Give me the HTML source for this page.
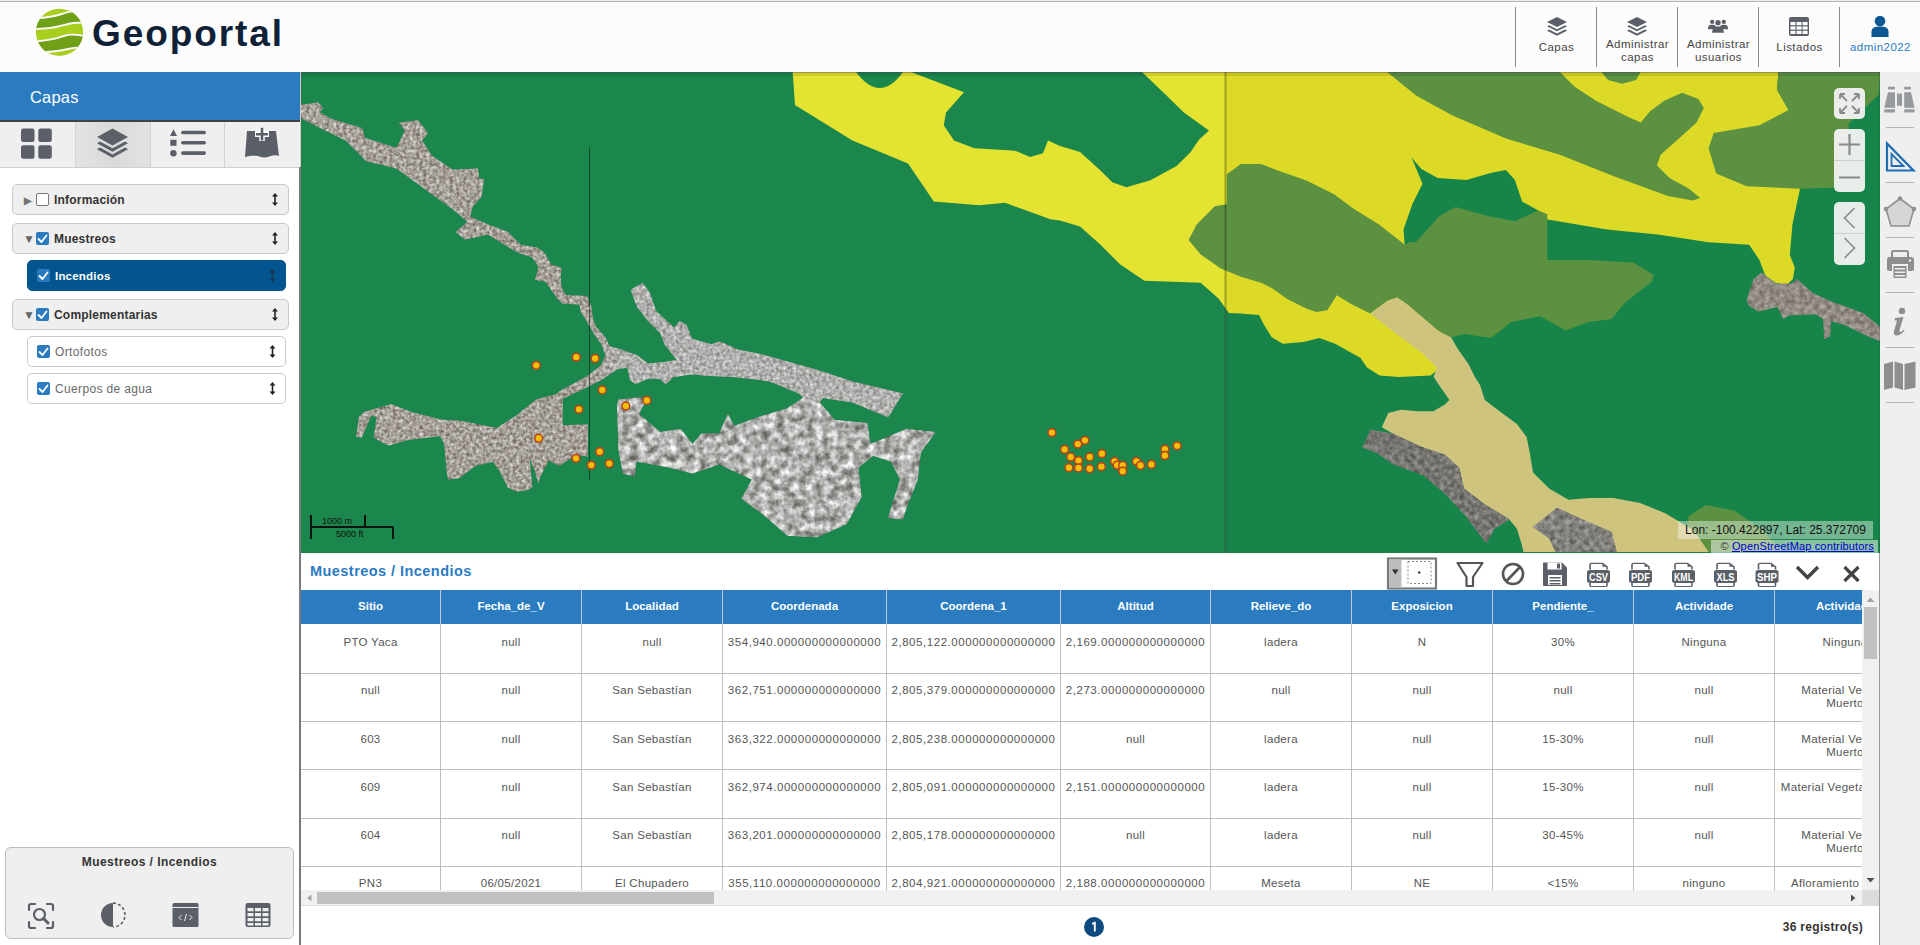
<!DOCTYPE html>
<html><head><meta charset="utf-8">
<style>
*{box-sizing:border-box;margin:0;padding:0}
html,body{width:1920px;height:945px;overflow:hidden;background:#fff;font-family:"Liberation Sans",sans-serif;position:relative}
.a{position:absolute}
#hdr{left:0;top:0;width:1920px;height:72px;background:#fcfcfc;border-top:1px solid #efefef}
#hdrl{left:0;top:1px;width:1920px;height:1px;background:#b4b4b4}
.brand{left:92px;top:12px;font-size:37px;font-weight:bold;color:#0f2136;letter-spacing:1.9px;line-height:44px}
.nv{top:7px;width:1px;height:60px;background:#8a8a8a}
.ni{top:0;width:81px;height:70px;text-align:center;color:#454545;font-size:11.5px;line-height:13.3px;letter-spacing:.45px}
.ni span{position:absolute;left:0;right:0}
#lp{left:0;top:72px;width:299px;height:873px;background:#fff}
#sep{left:299px;top:167px;width:2px;height:778px;background:#7a7a7a}
#sep2{left:300px;top:72px;width:1px;height:95px;background:#d6c4c4}
#capas{left:0;top:72px;width:300px;height:50px;background:#2b7bc1;color:#fff;font-size:16.5px;line-height:51px;padding-left:30px;letter-spacing:.2px;border-bottom:2px solid #3f4348}
#tabs{left:0;top:122px;width:299px;height:46px;background:#efefef;border-bottom:1px solid #cfcfcf}
.tb{top:0;height:45px;border-right:1px solid #d2d2d2}
.li{height:31px;border:1px solid #c9c9c9;border-radius:5px;background:#efefef;font-size:12px;font-weight:bold;color:#333;line-height:31px;letter-spacing:.2px}
.li.w{background:#fff;font-weight:normal;color:#6a6a6a;letter-spacing:.35px}
.li.sel{background:#03558f;border-color:#03558f;color:#fff}
.cb{position:absolute;top:8px;width:13px;height:13px;border-radius:2px;background:#2b7bc1}
.cb.off{background:#fff;border:1px solid #777}
.lt{position:absolute;top:0}
.ud{position:absolute;top:8px;width:7px;height:13px}
#rt{left:1880px;top:72px;width:40px;height:873px;background:#efefef}
#tp{left:301px;top:553px;width:1578px;height:392px;background:#fff}
#tpr{left:1879px;top:553px;width:1px;height:392px;background:#9a9a9a}
.ttl{left:310px;top:562px;font-size:14.5px;font-weight:bold;color:#2b7bc1;line-height:18px;letter-spacing:.45px}
#th{left:301px;top:590px;width:1561px;height:34px;background:#2b7bc1;overflow:hidden}
.hc{position:absolute;top:0;height:34px;line-height:32px;color:#fff;font-weight:bold;font-size:11.5px;text-align:center;border-left:1px solid #b9c9d9;white-space:nowrap}
#tb{left:301px;top:624px;width:1561px;height:266px;overflow:hidden}
.rw{position:absolute;left:0;width:1561px;height:49px;border-bottom:1px solid #bdbdbd}
.c{position:absolute;top:0;height:100%;border-left:1px solid #bdbdbd;text-align:center;color:#555;font-size:11.5px;line-height:13px;padding-top:11.5px;white-space:nowrap;overflow:hidden;letter-spacing:.3px}
.c.n{letter-spacing:.55px}
</style></head><body>
<div id="hdr" class="a"></div><div id="hdrl" class="a"></div>
<svg class="a" style="left:34px;top:7px" width="52" height="52" viewBox="0 0 52 52">
<defs><clipPath id="gc"><circle cx="25.5" cy="25.3" r="23.6"/></clipPath></defs>
<g clip-path="url(#gc)">
<rect x="0" y="0" width="52" height="52" fill="#a8cf1e"/>
<path d="M0 11.5 C8 11 18 10.5 27.7 7 C33 5 37 4 52 3 L52 16 C46 15.5 42 15 34 17 C26 19 18 22.5 0 21.8Z" fill="#6fa017"/>
<path d="M0 34.5 C8 34 18 33.5 30.9 28.6 C36 27 41 27 52 29.5 L52 41 C46 40 42 40 34.1 42 C26 44 16 45.5 0 45.5Z" fill="#6fa017"/>
<g fill="none" stroke="#fcfcfc" stroke-width="1.9">
<path d="M0 11.5 C8 11 18 10.5 27.7 7 C33 5 37 4 52 3"/>
<path d="M0 21.8 C18 22.5 26 19 34 17 C42 15 46 15.5 52 16"/>
<path d="M0 34.5 C8 34 18 33.5 30.9 28.6 C36 27 41 27 52 29.5"/>
<path d="M0 45.5 C16 45.5 26 44 34.1 42 C42 40 46 40 52 41"/>
</g>
</g></svg>
<div class="a brand">Geoportal</div>
<div class="a nv" style="left:1515px"></div>
<div class="a nv" style="left:1596px"></div>
<div class="a nv" style="left:1677px"></div>
<div class="a nv" style="left:1758px"></div>
<div class="a nv" style="left:1839px"></div>
<!-- nav items -->
<div class="a ni" style="left:1516px"><svg class="a" style="left:30px;top:16px" width="22" height="21" viewBox="0 0 22 21"><path d="M11 1 L21 6 L11 11 L1 6Z" fill="#5b6068"/><path d="M3 9.2 L11 13.2 L19 9.2 L21 10.3 L11 15.3 L1 10.3Z" fill="#5b6068"/><path d="M3 13.6 L11 17.6 L19 13.6 L21 14.7 L11 19.7 L1 14.7Z" fill="#5b6068"/></svg><span style="top:41px">Capas</span></div>
<div class="a ni" style="left:1597px"><svg class="a" style="left:29px;top:16px" width="22" height="21" viewBox="0 0 22 21"><path d="M11 1 L21 6 L11 11 L1 6Z" fill="#5b6068"/><path d="M3 9.2 L11 13.2 L19 9.2 L21 10.3 L11 15.3 L1 10.3Z" fill="#5b6068"/><path d="M3 13.6 L11 17.6 L19 13.6 L21 14.7 L11 19.7 L1 14.7Z" fill="#5b6068"/></svg><span style="top:38px">Administrar<br>capas</span></div>
<div class="a ni" style="left:1678px"><svg class="a" style="left:30px;top:18px" width="20" height="16" viewBox="0 0 24 18"><circle cx="5" cy="4" r="2.6" fill="#5b6068"/><circle cx="19" cy="4" r="2.6" fill="#5b6068"/><circle cx="12" cy="5" r="3.2" fill="#5b6068"/><path d="M0 13 C0 8 2 7.5 5 7.5 C8 7.5 10 8 10 13Z" fill="#5b6068"/><path d="M14 13 C14 8 16 7.5 19 7.5 C22 7.5 24 8 24 13Z" fill="#5b6068"/><path d="M5 17 C5 11 8 9.5 12 9.5 C16 9.5 19 11 19 17Z" fill="#5b6068"/></svg><span style="top:38px">Administrar<br>usuarios</span></div>
<div class="a ni" style="left:1759px"><svg class="a" style="left:29px;top:16px" width="22" height="21" viewBox="0 0 22 21"><rect x="1" y="1" width="20" height="19" rx="2" fill="#5b6068"/><g fill="#fcfcfc"><rect x="2.5" y="6" width="5" height="3.2"/><rect x="8.6" y="6" width="5" height="3.2"/><rect x="14.6" y="6" width="5" height="3.2"/><rect x="2.5" y="10.4" width="5" height="3.2"/><rect x="8.6" y="10.4" width="5" height="3.2"/><rect x="14.6" y="10.4" width="5" height="3.2"/><rect x="2.5" y="14.8" width="5" height="3.2"/><rect x="8.6" y="14.8" width="5" height="3.2"/><rect x="14.6" y="14.8" width="5" height="3.2"/></g></svg><span style="top:41px">Listados</span></div>
<div class="a ni" style="left:1840px;color:#2b7bc1"><svg class="a" style="left:31px;top:15px" width="18" height="22" viewBox="0 0 18 22"><circle cx="9" cy="6" r="5.3" fill="#0d5893"/><path d="M0.5 22 L0.5 17 C0.5 12.5 4 11.5 9 11.5 C14 11.5 17.5 12.5 17.5 17 L17.5 22Z" fill="#0d5893"/></svg><span style="top:41px">admin2022</span></div>
<svg class="a" style="left:301px;top:72px" width="1579" height="481" viewBox="301 72 1579 481">
<defs><filter id="tx" x="0" y="0" width="100%" height="100%" color-interpolation-filters="sRGB"><feTurbulence type="fractalNoise" baseFrequency="0.13" numOctaves="3" seed="7" result="n"/><feColorMatrix in="n" type="matrix" values="0 0 0 1.5 -0.25  0 0 0 1.5 -0.25  0 0 0 1.5 -0.25  0 0 0 0 1" result="g"/><feComposite in="g" in2="SourceAlpha" operator="in" result="gm"/><feBlend in="gm" in2="SourceGraphic" mode="overlay"/></filter><filter id="tx2" x="0" y="0" width="100%" height="100%" color-interpolation-filters="sRGB"><feTurbulence type="fractalNoise" baseFrequency="0.3" numOctaves="3" seed="11" result="n"/><feColorMatrix in="n" type="matrix" values="0 0 0 0.9 0.07  0 0 0 0.9 0.07  0 0 0 0.9 0.07  0 0 0 0 1" result="g"/><feComposite in="g" in2="SourceAlpha" operator="in" result="gm"/><feBlend in="gm" in2="SourceGraphic" mode="overlay"/></filter><filter id="tx3" x="0" y="0" width="100%" height="100%" color-interpolation-filters="sRGB"><feTurbulence type="fractalNoise" baseFrequency="0.2" numOctaves="3" seed="5" result="n"/><feColorMatrix in="n" type="matrix" values="0 0 0 0.45 0.275  0 0 0 0.45 0.275  0 0 0 0.45 0.275  0 0 0 0 1" result="g"/><feComposite in="g" in2="SourceAlpha" operator="in" result="gm"/><feBlend in="gm" in2="SourceGraphic" mode="overlay"/></filter><linearGradient id="yg" gradientUnits="userSpaceOnUse" x1="1224" y1="0" x2="1226" y2="0"><stop offset="0" stop-color="#e5e332"/><stop offset="1" stop-color="#dcda26"/></linearGradient><linearGradient id="sg" gradientUnits="userSpaceOnUse" x1="592" y1="0" x2="625" y2="0"><stop offset="0" stop-color="#a29c94"/><stop offset="1" stop-color="#adadab"/></linearGradient></defs>
<rect x="301" y="72" width="924.5" height="481" fill="#1c874c"/>
<rect x="1225.5" y="72" width="655" height="481" fill="#178549"/>
<polygon points="792.7,72.0 1778.4,72.0 1777.0,89.8 1788.6,110.0 1800.0,188.8 1792.4,224.4 1789.8,254.9 1794.8,267.6 1792.9,279.0 1787.1,284.8 1775.7,282.9 1765.2,275.2 1759.4,260.0 1749.2,244.7 1708.6,242.2 1657.8,234.5 1607.0,229.5 1546.0,219.3 1538.4,214.2 1450.0,300.0 1440.0,340.0 1436.8,370.6 1430.5,375.4 1398.7,377.0 1379.7,375.4 1367.0,367.5 1360.6,357.9 1335.2,343.7 1319.4,338.1 1303.5,342.1 1282.9,343.7 1271.7,337.3 1263.8,324.6 1259.0,315.1 1240.0,313.5 1228.8,312.9 1218.8,298.8 1200.7,282.7 1144.4,280.7 1120.3,264.6 1100.2,244.5 1080.1,226.4 1060.0,220.4 1050.5,219.3 1004.8,202.8 979.4,205.3 933.7,201.5 923.5,186.3 908.0,163.4 852.4,140.6 795.0,105.0" fill="url(#yg)"/>
<polygon points="910.8,72.0 964.0,92.3 946.0,112.6 943.8,125.3 954.0,140.6 974.3,148.2 1015.0,150.7 1030.0,157.0 1043.0,153.3 1048.0,140.6 1060.0,146.0 1080.1,152.0 1100.2,170.2 1112.3,182.2 1126.3,187.2 1150.5,180.2 1176.6,166.1 1190.7,152.1 1198.7,140.0 1209.0,130.4 1183.8,112.6 1166.0,94.9 1142.0,72.0" fill="#1c874c"/>
<path d="M856 72 Q880 104 903 72Z" fill="#1c874c"/>
<polygon points="1411.5,157.4 1421.4,169.1 1437.6,178.1 1466.3,179.9 1491.5,172.7 1505.9,170.0 1514.9,179.9 1522.1,201.5 1538.3,210.5 1547.3,219.5 1538.3,230.0 1514.9,230.0 1487.9,225.0 1455.6,215.0 1439.4,225.0 1416.0,250.0 1405.0,250.0 1403.5,229.5 1412.4,204.0 1422.5,183.7" fill="#178549"/>
<polygon points="1387.2,72.0 1559.9,72.0 1574.3,86.4 1595.9,100.8 1628.2,117.0 1640.8,122.4 1649.8,111.6 1664.2,100.8 1682.2,92.7 1698.4,99.0 1703.8,108.0 1696.6,122.4 1676.8,140.4 1660.6,154.7 1657.0,165.5 1669.6,178.1 1689.4,188.9 1700.2,197.9 1693.0,200.6 1667.8,196.1 1613.9,176.3 1559.9,154.7 1505.9,138.6 1452.0,115.2 1416.0,95.4" fill="#5b9140"/>
<polygon points="1601.3,72.0 1640.8,72.0 1636.0,80.0 1622.0,83.7 1608.0,80.0" fill="#5b9140"/>
<polygon points="1778.4,72.0 1777.0,89.8 1788.6,110.0 1759.4,125.3 1713.7,133.0 1708.6,148.2 1716.2,173.6 1746.7,186.3 1800.0,188.8 1833.3,187.8 1844.4,174.4 1848.9,123.3 1878.9,94.4 1880.0,72.0" fill="#5b9140"/>
<polygon points="1188.6,240.0 1196.7,224.4 1214.8,206.3 1226.8,204.3 1226.8,174.2 1240.9,164.1 1261.0,164.1 1277.1,170.2 1300.0,178.2 1308.0,181.2 1333.7,194.0 1354.0,209.0 1379.0,224.4 1404.8,244.7 1410.0,242.0 1416.0,242.0 1439.4,215.9 1455.6,206.9 1487.9,215.9 1514.9,221.3 1538.3,210.5 1547.3,214.2 1547.3,260.0 1588.0,260.0 1633.6,262.5 1654.0,275.2 1651.4,282.0 1625.7,302.0 1611.4,319.0 1588.6,322.0 1565.7,330.6 1540.0,316.3 1511.4,322.0 1491.4,337.7 1480.0,336.5 1465.4,334.1 1451.1,337.3 1438.4,331.0 1417.8,313.5 1406.7,304.0 1397.1,297.6 1387.6,300.8 1370.2,313.5 1351.1,304.0 1336.8,295.2 1327.3,310.3 1316.2,311.9 1306.7,308.7 1287.6,299.2 1271.7,288.1 1261.0,282.7 1240.9,276.7 1220.8,268.6 1200.7,254.6" fill="#5b9140"/>
<polygon points="1688.6,516.3 1705.7,504.9 1734.3,510.6 1762.9,530.6 1782.9,552.0 1682.9,552.0" fill="#5b9140"/>
<polygon points="1370.2,313.5 1387.6,300.8 1397.1,297.6 1406.7,304.0 1417.8,313.5 1438.4,331.0 1451.1,337.3 1457.5,348.4 1468.6,364.3 1474.9,377.0 1480.0,385.0 1484.8,400.0 1497.6,409.7 1516.9,424.1 1526.6,437.0 1529.8,453.1 1533.0,472.4 1549.1,488.5 1568.4,499.7 1589.3,498.1 1613.4,498.1 1640.0,502.9 1665.7,513.4 1694.0,530.6 1708.6,552.0 1523.4,552.0 1521.8,544.8 1516.9,528.7 1508.9,519.0 1484.8,504.6 1463.9,488.5 1459.0,467.6 1444.6,454.7 1420.4,446.6 1393.1,433.8 1381.8,427.3 1388.3,412.9 1401.1,409.7 1417.2,411.3 1433.3,411.3 1444.6,404.8 1449.4,400.0 1440.0,386.5 1433.7,377.0 1436.8,367.5 1422.5,353.2 1398.7,335.7" fill="#cfc47e"/>
<g filter="url(#tx3)">
<polygon points="1362.5,447.5 1370.6,429.8 1393.1,433.8 1420.4,446.6 1444.6,454.7 1459.0,467.6 1463.9,488.5 1484.8,504.6 1508.9,519.0 1508.9,519.8 1494.4,528.7 1486.4,543.2 1479.9,535.1 1465.5,515.8 1444.6,493.3 1423.6,475.6 1393.1,464.3 1377.0,453.1" fill="#767571"/>
<polygon points="1533.0,527.1 1557.1,507.8 1581.3,519.0 1611.8,531.9 1616.7,552.0 1555.5,552.0 1549.1,538.3" fill="#82817c"/>
<polygon points="1746.7,300.0 1753.8,279.0 1761.4,272.4 1775.7,283.8 1791.9,283.8 1796.7,279.0 1812.9,293.3 1830.0,301.0 1863.3,313.3 1880.0,326.7 1880.0,341.0 1868.1,336.2 1844.3,324.8 1831.0,321.0 1830.0,336.2 1824.3,339.0 1823.3,319.0 1815.7,314.3 1789.0,315.2 1783.3,319.0 1777.6,306.7 1758.6,311.4 1749.0,305.7" fill="#908a82"/>
</g>
<defs><clipPath id="mc"><rect x="301" y="72" width="1579" height="481"/></clipPath><clipPath id="lc"><rect x="301" y="72" width="924" height="481"/></clipPath></defs>
<filter id="hs" x="0" y="0" width="100%" height="100%" color-interpolation-filters="sRGB"><feTurbulence type="fractalNoise" baseFrequency="0.015 0.11" numOctaves="3" seed="21" result="n"/><feColorMatrix in="n" type="matrix" values="0 0 0 2.6 -0.8  0 0 0 2.6 -0.8  0 0 0 2.6 -0.8  0 0 0 0 1"/></filter>
<g filter="url(#tx2)">
<polygon points="356.2,436.7 359.0,417.1 364.4,411.7 391.5,404.2 410.4,411.7 441.6,419.8 461.9,421.1 489.0,426.6 497.1,427.9 516.0,415.7 536.3,399.5 556.7,394.1 560.0,391.0 562.7,400.2 562.7,425.2 587.8,424.5 587.8,456.4 575.6,455.0 559.4,465.8 548.5,460.4 540.4,476.7 538.4,483.4 535.0,471.2 529.6,457.7 532.3,487.5 526.9,490.2 516.0,491.6 507.9,487.5 499.8,471.2 493.0,461.8 475.4,465.8 459.2,478.0 448.3,479.4 447.0,474.0 444.3,444.2 440.2,436.0 407.7,440.1 388.7,445.5 380.6,441.5 373.9,437.4 376.6,417.1 371.1,415.7 361.7,437.4" fill="#a29c94"/>
<polygon points="300.0,105.0 318.0,102.5 323.0,107.6 320.0,112.6 331.7,119.0 362.0,128.0 365.0,138.0 396.5,148.0 405.0,130.4 399.0,122.8 418.0,120.3 428.0,133.0 422.0,140.6 432.0,155.8 452.4,169.8 477.8,168.5 479.0,178.7 484.0,178.7 481.6,196.4 472.7,206.6 470.0,216.8 488.0,224.4 508.0,232.0 521.0,245.0 536.9,247.6 543.7,251.9 551.3,264.6 561.5,268.0 560.6,278.1 561.5,287.4 565.7,295.0 586.9,295.9 591.1,306.0 592.8,318.0 595.8,326.4 605.4,337.4 609.5,346.3 621.9,349.8 637.0,355.3 648.0,363.5 664.5,362.0 676.9,360.0 664.5,344.3 660.4,333.3 648.0,320.9 637.0,307.1 631.5,292.0 631.5,289.3 642.5,283.0 649.4,292.0 656.3,311.3 674.2,327.8 679.7,320.9 686.5,325.0 692.0,338.8 711.3,344.3 719.6,341.5 738.8,349.8 760.0,353.9 769.6,356.4 817.0,369.8 852.6,381.6 903.0,393.5 888.1,417.2 852.6,402.4 823.0,398.0 817.0,405.3 805.0,399.4 799.0,393.5 769.6,381.6 760.0,380.0 736.0,377.3 711.3,375.9 690.7,374.5 672.8,377.3 666.0,384.2 659.0,378.7 648.0,378.7 635.7,384.2 630.0,380.0 627.4,367.7 617.8,369.0 601.3,380.0 587.5,386.9 560.0,400.0 556.0,396.0 560.0,391.0 587.5,375.9 601.3,364.9 605.4,355.3 601.3,344.3 594.4,334.6 588.9,325.0 586.0,320.0 581.0,312.0 579.3,304.4 562.3,303.5 558.1,299.3 549.6,287.4 545.4,281.5 535.2,279.8 538.6,267.1 531.9,256.9 520.0,253.5 513.0,249.8 488.0,234.5 465.0,239.6 456.0,232.0 467.6,221.8 452.4,209.0 424.4,188.8 396.5,168.5 366.0,161.0 345.7,140.6 325.4,130.4 300.0,117.7" fill="url(#sg)"/>
</g><g filter="url(#tx)">
<polygon points="617.0,405.3 618.5,399.4 648.0,396.4 639.0,414.0 660.0,432.0 680.7,429.0 692.6,443.9 701.5,433.5 719.0,433.5 728.0,414.0 734.0,426.0 757.8,417.2 787.4,408.3 805.0,396.4 820.0,402.4 834.8,420.0 867.4,423.0 870.4,443.9 885.2,438.0 906.0,429.0 935.6,432.0 920.7,452.7 917.8,479.4 906.0,509.0 903.0,519.4 888.0,518.0 900.0,479.4 891.0,461.6 873.3,455.7 858.5,467.6 861.5,497.2 846.7,523.9 817.0,537.2 787.4,535.7 763.7,515.0 741.5,498.7 751.9,479.4 719.0,464.6 692.6,473.5 668.9,467.6 636.3,461.6 634.8,476.4 623.0,473.5 618.5,449.8" fill="#b0b0ae"/>
</g>
<path d="M589.5 148 V480" stroke="rgba(0,20,10,.55)" stroke-width="1"/>
<path d="M1225.5 72 V553" stroke="rgba(0,0,0,.28)" stroke-width="2"/>
<rect x="301" y="72" width="1579" height="1" fill="rgba(70,50,90,.45)"/><rect x="301" y="73" width="1579" height="3" fill="rgba(0,0,0,.10)"/>
<circle cx="536.2" cy="365.3" r="3.9" fill="#f2be0a" stroke="#b8401a" stroke-width="1.5"/>
<circle cx="576.3" cy="357.2" r="3.9" fill="#f2be0a" stroke="#b8401a" stroke-width="1.5"/>
<circle cx="595.1" cy="358.5" r="3.9" fill="#f2be0a" stroke="#b8401a" stroke-width="1.5"/>
<circle cx="602.2" cy="390" r="3.9" fill="#f2be0a" stroke="#b8401a" stroke-width="1.5"/>
<circle cx="578.9" cy="409.3" r="3.9" fill="#f2be0a" stroke="#b8401a" stroke-width="1.5"/>
<circle cx="538.7" cy="438.2" r="3.9" fill="#f2be0a" stroke="#b8401a" stroke-width="1.5"/>
<circle cx="599.7" cy="451.7" r="3.9" fill="#f2be0a" stroke="#b8401a" stroke-width="1.5"/>
<circle cx="576" cy="458.3" r="3.9" fill="#f2be0a" stroke="#b8401a" stroke-width="1.5"/>
<circle cx="591.3" cy="465.1" r="3.9" fill="#f2be0a" stroke="#b8401a" stroke-width="1.5"/>
<circle cx="609.3" cy="463.6" r="3.9" fill="#f2be0a" stroke="#b8401a" stroke-width="1.5"/>
<circle cx="625.8" cy="406" r="3.9" fill="#f2be0a" stroke="#b8401a" stroke-width="1.5"/>
<circle cx="646.9" cy="400.4" r="3.9" fill="#f2be0a" stroke="#b8401a" stroke-width="1.5"/>
<circle cx="1051.9" cy="432.6" r="3.9" fill="#f2be0a" stroke="#b8401a" stroke-width="1.5"/>
<circle cx="1084.9" cy="440.3" r="3.9" fill="#f2be0a" stroke="#b8401a" stroke-width="1.5"/>
<circle cx="1077.8" cy="444.1" r="3.9" fill="#f2be0a" stroke="#b8401a" stroke-width="1.5"/>
<circle cx="1064.6" cy="449.4" r="3.9" fill="#f2be0a" stroke="#b8401a" stroke-width="1.5"/>
<circle cx="1070.7" cy="457" r="3.9" fill="#f2be0a" stroke="#b8401a" stroke-width="1.5"/>
<circle cx="1089.7" cy="457" r="3.9" fill="#f2be0a" stroke="#b8401a" stroke-width="1.5"/>
<circle cx="1101.9" cy="453.7" r="3.9" fill="#f2be0a" stroke="#b8401a" stroke-width="1.5"/>
<circle cx="1078.5" cy="460.6" r="3.9" fill="#f2be0a" stroke="#b8401a" stroke-width="1.5"/>
<circle cx="1068.9" cy="467.7" r="3.9" fill="#f2be0a" stroke="#b8401a" stroke-width="1.5"/>
<circle cx="1078.5" cy="467.9" r="3.9" fill="#f2be0a" stroke="#b8401a" stroke-width="1.5"/>
<circle cx="1089.7" cy="468.7" r="3.9" fill="#f2be0a" stroke="#b8401a" stroke-width="1.5"/>
<circle cx="1101.4" cy="466.7" r="3.9" fill="#f2be0a" stroke="#b8401a" stroke-width="1.5"/>
<circle cx="1114.6" cy="461.3" r="3.9" fill="#f2be0a" stroke="#b8401a" stroke-width="1.5"/>
<circle cx="1117.1" cy="465.1" r="3.9" fill="#f2be0a" stroke="#b8401a" stroke-width="1.5"/>
<circle cx="1122.7" cy="465.4" r="3.9" fill="#f2be0a" stroke="#b8401a" stroke-width="1.5"/>
<circle cx="1122.7" cy="471.2" r="3.9" fill="#f2be0a" stroke="#b8401a" stroke-width="1.5"/>
<circle cx="1136.4" cy="461.3" r="3.9" fill="#f2be0a" stroke="#b8401a" stroke-width="1.5"/>
<circle cx="1140.5" cy="465.4" r="3.9" fill="#f2be0a" stroke="#b8401a" stroke-width="1.5"/>
<circle cx="1151.4" cy="464.4" r="3.9" fill="#f2be0a" stroke="#b8401a" stroke-width="1.5"/>
<circle cx="1164.9" cy="449.1" r="3.9" fill="#f2be0a" stroke="#b8401a" stroke-width="1.5"/>
<circle cx="1164.9" cy="455.5" r="3.9" fill="#f2be0a" stroke="#b8401a" stroke-width="1.5"/>
<circle cx="1177.1" cy="445.8" r="3.9" fill="#f2be0a" stroke="#b8401a" stroke-width="1.5"/>
<g stroke="#111" stroke-width="2" fill="none"><path d="M311 515 V539 M311 527 H393 M365 515 V527 M393 527 V539"/></g>
<text x="322" y="524" font-family="Liberation Sans" font-size="9" fill="#111">1000 m</text>
<text x="336" y="537" font-family="Liberation Sans" font-size="9" fill="#111">5000 ft</text>
</svg>
<div class="a" style="left:1678px;top:521px;width:195px;height:18px;background:rgba(255,255,255,.4);font-size:12px;line-height:18px;color:#111;text-align:center">Lon: -100.422897, Lat: 25.372709</div>
<div class="a" style="left:1711px;top:540px;width:167px;height:13px;background:rgba(255,255,255,.5);font-size:11px;line-height:13px;color:#333;text-align:right;padding-right:4px;letter-spacing:.15px;white-space:nowrap">© <span style="color:#00c;text-decoration:underline">OpenStreetMap contributors</span></div><div id="lp" class="a"></div>
<div id="capas" class="a">Capas</div>
<div id="tabs" class="a"></div>
<div class="a" style="left:75px;top:122px;width:76px;height:45px;background:linear-gradient(90deg,#e4e4e4,#d9d9d9 50%,#e2e2e2);border-left:1px solid #d2d2d2;border-right:1px solid #d2d2d2"></div>
<div class="a" style="left:224px;top:122px;width:1px;height:45px;background:#d2d2d2"></div>
<svg class="a" style="left:20px;top:127px" width="34" height="33" viewBox="0 0 34 33"><g fill="#5b6068"><rect x="1" y="1.5" width="13.5" height="13.5" rx="2.2"/><rect x="18.3" y="1.5" width="13.5" height="13.5" rx="2.2"/><rect x="1" y="18.2" width="13.5" height="13.5" rx="2.2"/><rect x="18.3" y="18.2" width="13.5" height="13.5" rx="2.2"/></g></svg>
<svg class="a" style="left:96px;top:127px" width="34" height="33" viewBox="0 0 34 33"><g fill="#5b6068"><path d="M16.5 1.5 L32 10 L16.5 18.5 L1 10Z"/><path d="M4 14.5 L16.5 21.3 L29 14.5 L32 16.2 L16.5 24.7 L1 16.2Z"/><path d="M4 20.6 L16.5 27.4 L29 20.6 L32 22.3 L16.5 30.8 L1 22.3Z"/></g></svg>
<svg class="a" style="left:168px;top:127px" width="40" height="33" viewBox="0 0 40 33"><g fill="#5b6068"><path d="M5.5 2.3 L9 9 L2 9Z"/><rect x="2.3" y="12.8" width="6.2" height="6"/><circle cx="5.4" cy="26.3" r="3.2"/><rect x="13" y="3.7" width="25" height="3.6" rx="1.8"/><rect x="13" y="14" width="25" height="3.6" rx="1.8"/><rect x="13" y="24.3" width="25" height="3.6" rx="1.8"/></g></svg>
<svg class="a" style="left:243px;top:126px" width="38" height="34" viewBox="0 0 38 34"><path d="M4 5 L12 5 L12 11 L26 11 L26 5 L33 5 L36 30 C30 27 24 33 18 31 C12 29 7 30 2 31Z" fill="#5b6068"/><path d="M19 1.5 L19 15 M12.5 8.2 L25.5 8.2" stroke="#fff" stroke-width="5.5"/><path d="M19 1.8 L19 14.5 M13 8.2 L25 8.2" stroke="#5b6068" stroke-width="2.6"/></svg>

<!-- layer items -->
<div class="a li" style="left:12px;top:184px;width:277px"><span class="lt" style="left:11px;font-size:10px;color:#777">&#9654;</span><span class="cb off" style="left:23px"></span><span class="lt" style="left:41px">Información</span></div>
<div class="a li" style="left:12px;top:223px;width:277px"><span class="lt" style="left:10px;font-size:12px;color:#666">&#9660;</span><span class="cb" style="left:23px"></span><span class="lt" style="left:41px">Muestreos</span></div>
<div class="a li sel" style="left:27px;top:260px;width:259px;font-weight:bold;font-size:11.5px"><span class="cb" style="left:9px;top:8px;background:#2b7bc1;opacity:.95"></span><span class="lt" style="left:27px">Incendios</span></div>
<div class="a li" style="left:12px;top:299px;width:277px"><span class="lt" style="left:10px;font-size:12px;color:#666">&#9660;</span><span class="cb" style="left:23px"></span><span class="lt" style="left:41px">Complementarias</span></div>
<div class="a li w" style="left:27px;top:336px;width:259px;font-size:12px"><span class="cb" style="left:9px"></span><span class="lt" style="left:27px">Ortofotos</span></div>
<div class="a li w" style="left:27px;top:373px;width:259px;font-size:12px"><span class="cb" style="left:9px"></span><span class="lt" style="left:27px">Cuerpos de agua</span></div>
<!-- checks -->
<svg class="a" style="left:0;top:0" width="300" height="420" viewBox="0 0 300 420">
<g fill="none" stroke="#fff" stroke-width="1.8" stroke-linecap="round" stroke-linejoin="round">
<path d="M38.5 239 L41.5 242 L46.5 235.5"/>
<path d="M39.5 276 L42.5 279 L47.5 272.5"/>
<path d="M38.5 315 L41.5 318 L46.5 311.5"/>
<path d="M39.5 352 L42.5 355 L47.5 348.5"/>
<path d="M39.5 389 L42.5 392 L47.5 385.5"/>
</g>
<g fill="#222">
<path d="M275 193 L278 196.5 L272 196.5Z M275 206 L278 202.5 L272 202.5Z"/><rect x="274.2" y="196" width="1.6" height="7"/>
<path d="M275 232 L278 235.5 L272 235.5Z M275 245 L278 241.5 L272 241.5Z"/><rect x="274.2" y="235" width="1.6" height="7"/>
<path d="M275 308 L278 311.5 L272 311.5Z M275 321 L278 317.5 L272 317.5Z"/><rect x="274.2" y="311" width="1.6" height="7"/>
<path d="M272.5 345 L275.5 348.5 L269.5 348.5Z M272.5 358 L275.5 354.5 L269.5 354.5Z"/><rect x="271.7" y="348" width="1.6" height="7"/>
<path d="M272.5 382 L275.5 385.5 L269.5 385.5Z M272.5 395 L275.5 391.5 L269.5 391.5Z"/><rect x="271.7" y="385" width="1.6" height="7"/>
</g>
<g fill="#1a3550">
<path d="M272.5 269 L275.5 272.5 L269.5 272.5Z M272.5 282 L275.5 278.5 L269.5 278.5Z"/><rect x="271.7" y="272" width="1.6" height="7"/>
</g>
</svg>
<!-- bottom box -->
<div class="a" style="left:5px;top:847px;width:289px;height:92px;background:#efefef;border:1px solid #bdbdbd;border-radius:6px"></div>
<div class="a" style="left:5px;top:854px;width:289px;text-align:center;font-size:12px;font-weight:bold;color:#333;line-height:16px;letter-spacing:.45px">Muestreos / Incendios</div>
<svg class="a" style="left:27px;top:902px" width="28" height="28" viewBox="0 0 28 28"><g fill="none" stroke="#5b6068" stroke-width="2.2" stroke-linecap="round"><path d="M2 8 V4 Q2 2 4 2 H8 M20 2 H24 Q26 2 26 4 V8 M26 20 V24 Q26 26 24 26 H20 M8 26 H4 Q2 26 2 24 V20"/><circle cx="12.5" cy="12.5" r="5.5"/><path d="M16.5 16.5 L21 21" stroke-width="3"/></g></svg>
<svg class="a" style="left:100px;top:902px" width="26" height="26" viewBox="0 0 26 26"><path d="M13 1 A12 12 0 0 0 13 25Z" fill="#5b6068"/><path d="M13 1 A12 12 0 0 1 13 25" fill="none" stroke="#5b6068" stroke-width="1.6" stroke-dasharray="3 2.2"/></svg>
<svg class="a" style="left:172px;top:902px" width="27" height="26" viewBox="0 0 27 26"><rect x="0.5" y="1" width="26" height="24" rx="1.5" fill="#5b6068"/><rect x="0.5" y="5" width="26" height="1" fill="#efefef"/><path d="M9.5 13 L7 15.5 L9.5 18 M17.5 13 L20 15.5 L17.5 18 M14.5 12 L12.5 19" fill="none" stroke="#efefef" stroke-width="1"/></svg>
<svg class="a" style="left:245px;top:902px" width="26" height="26" viewBox="0 0 26 26"><rect x="0.5" y="1" width="25" height="24" rx="2" fill="#5b6068"/><g fill="#efefef"><rect x="2.5" y="6" width="6" height="3.3"/><rect x="10" y="6" width="6" height="3.3"/><rect x="17.5" y="6" width="6" height="3.3"/><rect x="2.5" y="11" width="6" height="3.3"/><rect x="10" y="11" width="6" height="3.3"/><rect x="17.5" y="11" width="6" height="3.3"/><rect x="2.5" y="16" width="6" height="3.3"/><rect x="10" y="16" width="6" height="3.3"/><rect x="17.5" y="16" width="6" height="3.3"/><rect x="2.5" y="21" width="6" height="2.5"/><rect x="10" y="21" width="6" height="2.5"/><rect x="17.5" y="21" width="6" height="2.5"/></g></svg>
<div id="sep" class="a"></div><div id="sep2" class="a"></div>
<div id="rt" class="a"></div>
<div class="a" style="left:1878px;top:72px;width:2px;height:481px;background:linear-gradient(90deg,rgba(0,0,0,.0),rgba(0,0,0,.12))"></div>
<svg class="a" style="left:1880px;top:72px" width="40" height="340" viewBox="0 0 40 340">
<g stroke="#b3b3b3" stroke-width="1"><path d="M6 55.5 H34 M6 110.5 H34 M6 165.5 H34 M6 220.5 H34 M6 275.5 H34 M6 330.5 H34"/></g>
<g fill="#8e8e8e">
<rect x="8" y="14.8" width="7" height="2.8" rx=".8" fill="#96999e"/><rect x="24.2" y="14.8" width="6.8" height="2.8" rx=".8" fill="#96999e"/>
<path d="M8 20.3 H15 V35.8 H4.2Z" fill="#96999e"/><path d="M24.2 20.3 H31 L34.6 35.8 H24.2Z" fill="#96999e"/>
<rect x="4.2" y="37.2" width="10.8" height="3.4" rx="1" fill="#96999e"/><rect x="24.2" y="37.2" width="10.4" height="3.4" rx="1" fill="#96999e"/>
<rect x="17" y="21.6" width="5" height="12.2" fill="#96999e"/>
</g>
<g fill="none" stroke="#1f6db5" stroke-width="2.2" stroke-linejoin="miter"><path d="M7 71.5 L7 98.5 L33.5 98.5Z"/><path d="M11.5 82 L11.5 94 L23.5 94Z" stroke-width="1.8"/></g>
<g fill="#d6d6d6" stroke="#909090" stroke-width="1.6"><path d="M20 126.5 L34 137 L29 154 L11 154 L6 137Z"/></g>
<g fill="#909090"><circle cx="20" cy="126.5" r="2.2"/><circle cx="34" cy="137" r="2.2"/><circle cx="6" cy="137" r="2.2"/></g>
<g fill="#8e8e8e"><rect x="12" y="179" width="16" height="7" rx="1.5" fill="none" stroke="#8e8e8e" stroke-width="2"/><rect x="7" y="185" width="27" height="14" rx="2.5"/><rect x="12" y="192" width="16" height="15" fill="#efefef"/><rect x="13.5" y="194" width="13" height="12" fill="#8e8e8e"/><rect x="15" y="196" width="10" height="1.5" fill="#efefef"/><rect x="15" y="199.5" width="10" height="1.5" fill="#efefef"/><rect x="15" y="203" width="10" height="1.5" fill="#efefef"/><circle cx="30" cy="188.5" r="1.2" fill="#efefef"/></g>
<g fill="#8e8e8e"><circle cx="22" cy="239" r="3.2"/><path d="M15 246 L23.5 245 L19.5 258 Q19 261 21.5 259.5 L24 257.5 L24.5 258.5 Q20 264 16 263.5 Q13 263 14 259 L17 248.5 L14.5 248.5Z"/></g>
<g fill="#8e8e8e"><path d="M4 292 L13 289.5 L13 315.5 L4 318Z"/><path d="M14.5 289.5 L23 292 L23 318 L14.5 315.5Z"/><path d="M24.5 292 L35.5 289.5 L35.5 315.5 L24.5 318Z"/></g>
</svg>
<!-- map controls -->
<div class="a" style="left:1834px;top:88px;width:31px;height:31px;background:rgba(242,242,242,.95);border-radius:5px"></div>
<div class="a" style="left:1834px;top:129px;width:31px;height:63px;background:rgba(242,242,242,.95);border-radius:5px;border-bottom:0"></div>
<div class="a" style="left:1834px;top:202px;width:31px;height:63px;background:rgba(242,242,242,.95);border-radius:5px"></div>
<svg class="a" style="left:1834px;top:88px" width="31" height="180" viewBox="0 0 31 180">
<g stroke="#cfcfcf" stroke-width="1"><path d="M0 72.5 H31 M0 145.5 H31"/></g>
<g fill="none" stroke="#8a8a8a" stroke-width="1.8"><path d="M6 6 L13 13 M6 6 H11 M6 6 V11 M25 6 L18 13 M25 6 H20 M25 6 V11 M6 25 L13 18 M6 25 H11 M6 25 V20 M25 25 L18 18 M25 25 H20 M25 25 V20"/></g>
<g fill="none" stroke="#8a8a8a" stroke-width="2.2"><path d="M5 56.5 H26 M15.5 46 V67 M5 89.5 H26"/></g>
<g fill="none" stroke="#8a8a8a" stroke-width="1.6"><path d="M20.5 120 L10.5 130 L20.5 140 M10.5 150 L20.5 160 L10.5 170"/></g>
</svg>
<div id="tp" class="a"></div><div id="tpr" class="a"></div>
<div class="a ttl">Muestreos / Incendios</div>
<div id="th" class="a">
<div class="hc" style="left:0px;width:139px;border-left:0;">Sitio</div>
<div class="hc" style="left:139px;width:141px;">Fecha_de_V</div>
<div class="hc" style="left:280px;width:141px;">Localidad</div>
<div class="hc" style="left:421px;width:164px;">Coordenada</div>
<div class="hc" style="left:585px;width:174px;">Coordena_1</div>
<div class="hc" style="left:759px;width:150px;">Altitud</div>
<div class="hc" style="left:909px;width:141px;">Relieve_do</div>
<div class="hc" style="left:1050px;width:141px;">Exposicion</div>
<div class="hc" style="left:1191px;width:141px;">Pendiente_</div>
<div class="hc" style="left:1332px;width:141px;">Actividade</div>
<div class="hc" style="left:1473px;width:141px;">Actividade</div>
</div>
<div id="tb" class="a">
<div class="rw" style="top:0px;height:50px">
<div class="c" style="left:0px;width:139px;border-left:0;padding-top:11.7px">PTO Yaca</div>
<div class="c" style="left:139px;width:141px;padding-top:11.7px">null</div>
<div class="c" style="left:280px;width:141px;padding-top:11.7px">null</div>
<div class="c n" style="left:421px;width:164px;padding-top:11.7px">354,940.000000000000000</div>
<div class="c n" style="left:585px;width:174px;padding-top:11.7px">2,805,122.000000000000000</div>
<div class="c n" style="left:759px;width:150px;padding-top:11.7px">2,169.000000000000000</div>
<div class="c" style="left:909px;width:141px;padding-top:11.7px">ladera</div>
<div class="c" style="left:1050px;width:141px;padding-top:11.7px">N</div>
<div class="c" style="left:1191px;width:141px;padding-top:11.7px">30%</div>
<div class="c" style="left:1332px;width:141px;padding-top:11.7px">Ninguna</div>
<div class="c" style="left:1473px;width:141px;padding-top:11.7px">Ninguna</div>
</div>
<div class="rw" style="top:50px;height:48px">
<div class="c" style="left:0px;width:139px;border-left:0;padding-top:9.7px">null</div>
<div class="c" style="left:139px;width:141px;padding-top:9.7px">null</div>
<div class="c" style="left:280px;width:141px;padding-top:9.7px">San Sebastían</div>
<div class="c n" style="left:421px;width:164px;padding-top:9.7px">362,751.000000000000000</div>
<div class="c n" style="left:585px;width:174px;padding-top:9.7px">2,805,379.000000000000000</div>
<div class="c n" style="left:759px;width:150px;padding-top:9.7px">2,273.000000000000000</div>
<div class="c" style="left:909px;width:141px;padding-top:9.7px">null</div>
<div class="c" style="left:1050px;width:141px;padding-top:9.7px">null</div>
<div class="c" style="left:1191px;width:141px;padding-top:9.7px">null</div>
<div class="c" style="left:1332px;width:141px;padding-top:9.7px">null</div>
<div class="c" style="left:1473px;width:141px;padding-top:9.7px">Material Vegetal<br>Muerto</div>
</div>
<div class="rw" style="top:98px;height:48px">
<div class="c" style="left:0px;width:139px;border-left:0;padding-top:10.7px">603</div>
<div class="c" style="left:139px;width:141px;padding-top:10.7px">null</div>
<div class="c" style="left:280px;width:141px;padding-top:10.7px">San Sebastían</div>
<div class="c n" style="left:421px;width:164px;padding-top:10.7px">363,322.000000000000000</div>
<div class="c n" style="left:585px;width:174px;padding-top:10.7px">2,805,238.000000000000000</div>
<div class="c" style="left:759px;width:150px;padding-top:10.7px">null</div>
<div class="c" style="left:909px;width:141px;padding-top:10.7px">ladera</div>
<div class="c" style="left:1050px;width:141px;padding-top:10.7px">null</div>
<div class="c" style="left:1191px;width:141px;padding-top:10.7px">15-30%</div>
<div class="c" style="left:1332px;width:141px;padding-top:10.7px">null</div>
<div class="c" style="left:1473px;width:141px;padding-top:10.7px">Material Vegetal<br>Muerto</div>
</div>
<div class="rw" style="top:146px;height:49px">
<div class="c" style="left:0px;width:139px;border-left:0;padding-top:10.7px">609</div>
<div class="c" style="left:139px;width:141px;padding-top:10.7px">null</div>
<div class="c" style="left:280px;width:141px;padding-top:10.7px">San Sebastían</div>
<div class="c n" style="left:421px;width:164px;padding-top:10.7px">362,974.000000000000000</div>
<div class="c n" style="left:585px;width:174px;padding-top:10.7px">2,805,091.000000000000000</div>
<div class="c n" style="left:759px;width:150px;padding-top:10.7px">2,151.000000000000000</div>
<div class="c" style="left:909px;width:141px;padding-top:10.7px">ladera</div>
<div class="c" style="left:1050px;width:141px;padding-top:10.7px">null</div>
<div class="c" style="left:1191px;width:141px;padding-top:10.7px">15-30%</div>
<div class="c" style="left:1332px;width:141px;padding-top:10.7px">null</div>
<div class="c" style="left:1473px;width:141px;padding-top:10.7px">Material Vegetal Muerto</div>
</div>
<div class="rw" style="top:195px;height:48px">
<div class="c" style="left:0px;width:139px;border-left:0;padding-top:9.7px">604</div>
<div class="c" style="left:139px;width:141px;padding-top:9.7px">null</div>
<div class="c" style="left:280px;width:141px;padding-top:9.7px">San Sebastían</div>
<div class="c n" style="left:421px;width:164px;padding-top:9.7px">363,201.000000000000000</div>
<div class="c n" style="left:585px;width:174px;padding-top:9.7px">2,805,178.000000000000000</div>
<div class="c" style="left:759px;width:150px;padding-top:9.7px">null</div>
<div class="c" style="left:909px;width:141px;padding-top:9.7px">ladera</div>
<div class="c" style="left:1050px;width:141px;padding-top:9.7px">null</div>
<div class="c" style="left:1191px;width:141px;padding-top:9.7px">30-45%</div>
<div class="c" style="left:1332px;width:141px;padding-top:9.7px">null</div>
<div class="c" style="left:1473px;width:141px;padding-top:9.7px">Material Vegetal<br>Muerto</div>
</div>
<div class="rw" style="top:243px;height:48px">
<div class="c" style="left:0px;width:139px;border-left:0;padding-top:10.2px">PN3</div>
<div class="c" style="left:139px;width:141px;padding-top:10.2px">06/05/2021</div>
<div class="c" style="left:280px;width:141px;padding-top:10.2px">El Chupadero</div>
<div class="c n" style="left:421px;width:164px;padding-top:10.2px">355,110.000000000000000</div>
<div class="c n" style="left:585px;width:174px;padding-top:10.2px">2,804,921.000000000000000</div>
<div class="c n" style="left:759px;width:150px;padding-top:10.2px">2,188.000000000000000</div>
<div class="c" style="left:909px;width:141px;padding-top:10.2px">Meseta</div>
<div class="c" style="left:1050px;width:141px;padding-top:10.2px">NE</div>
<div class="c" style="left:1191px;width:141px;padding-top:10.2px">&lt;15%</div>
<div class="c" style="left:1332px;width:141px;padding-top:10.2px">ninguno</div>
<div class="c" style="left:1473px;width:141px;padding-top:10.2px">Afloramiento rocoso</div>
</div>
</div><!-- v scrollbar -->
<div class="a" style="left:1862px;top:590px;width:17px;height:300px;background:#f1f1f1"></div>
<div class="a" style="left:1864px;top:607px;width:13px;height:52px;background:#c1c1c1"></div>
<svg class="a" style="left:1862px;top:590px" width="17" height="300" viewBox="0 0 17 300"><path d="M4.5 12 L8.5 7.5 L12.5 12Z" fill="#a3a3a3"/><path d="M4.5 288 L8.5 292.5 L12.5 288Z" fill="#505050"/></svg>
<!-- h scrollbar -->
<div class="a" style="left:301px;top:890px;width:1561px;height:16px;background:#f1f1f1;border-bottom:1px solid #dcdcdc"></div>
<div class="a" style="left:317px;top:892px;width:397px;height:12px;background:#c1c1c1"></div>
<div class="a" style="left:1862px;top:890px;width:17px;height:16px;background:#dcdcdc"></div>
<svg class="a" style="left:301px;top:890px" width="1561" height="16" viewBox="0 0 1561 16"><path d="M10.5 4.5 L6 8 L10.5 11.5Z" fill="#a3a3a3"/><path d="M1550 4.5 L1554.5 8 L1550 11.5Z" fill="#505050"/></svg>
<!-- pager -->
<svg class="a" style="left:1083px;top:916px" width="22" height="22" viewBox="0 0 22 22"><circle cx="11" cy="11" r="10" fill="#0d4a80"/><path d="M9.2 8 L11.8 6.5 L11.8 15.5" fill="none" stroke="#fff" stroke-width="1.9" stroke-linejoin="round"/></svg>
<div class="a" style="left:1700px;top:919px;width:163px;text-align:right;font-size:12px;font-weight:bold;color:#333;line-height:16px;letter-spacing:.3px">36 registro(s)</div>
<!-- table toolbar -->
<svg class="a" style="left:1380px;top:552px" width="500" height="40" viewBox="0 0 500 40">
<rect x="8" y="6.5" width="48" height="30" fill="#fff" stroke="#7a7a7a" stroke-width="2.2"/>
<rect x="9" y="7.5" width="12.5" height="28" fill="#bdbdbd"/>
<path d="M12 17.5 L18.5 17.5 L15.25 22.5Z" fill="#333"/>
<rect x="28" y="9.5" width="23" height="22" fill="none" stroke="#888" stroke-width="1" stroke-dasharray="2 2"/>
<circle cx="39.2" cy="20.5" r="1.2" fill="#333"/>
<path d="M77.5 11 L102.5 11 L93 25 L93 34 L86.5 34 L86.5 25Z" fill="none" stroke="#555" stroke-width="2.2" stroke-linejoin="round"/>
<circle cx="133" cy="22" r="10" fill="none" stroke="#555" stroke-width="2.6"/><path d="M126.5 29 L140 15" stroke="#555" stroke-width="2.6"/>
<path d="M163 11 Q163 10.5 164 10.5 L182 10.5 L187 15.5 L187 33 Q187 34 186 34 L164 34 Q163 34 163 33Z" fill="#5b6068"/>
<rect x="167.5" y="10.5" width="14" height="7" fill="#fff"/><rect x="177" y="11.5" width="3" height="5" fill="#5b6068"/>
<rect x="168" y="23" width="14" height="10" fill="#fff"/><rect x="169.5" y="25" width="11" height="1.5" fill="#5b6068"/><rect x="169.5" y="28" width="11" height="1.5" fill="#5b6068"/><rect x="169.5" y="31" width="11" height="1.5" fill="#5b6068"/>
</svg>
<svg class="a" style="left:1580px;top:552px" width="300" height="40" viewBox="0 0 300 40">
<defs>
<g id="fi"><path d="M3 10.5 L3 3.5 Q3 2 4.5 2 L15.5 2 L20 6.5 L20 10.5 M3 29 L3 32.5 Q3 34 4.5 34 L18.5 34 Q20 34 20 32.5 L20 29" fill="none" stroke="#5b6068" stroke-width="1.6"/><path d="M15.5 2 L20 6.5 L15.5 6.5Z" fill="#5b6068"/><rect x="0" y="11" width="23" height="18" rx="3" fill="#5b6068"/></g>
</defs>
<g transform="translate(7,10) scale(1,0.72)"><use href="#fi"/></g>
<g transform="translate(49,10) scale(1,0.72)"><use href="#fi"/></g>
<g transform="translate(92,10) scale(1,0.72)"><use href="#fi"/></g>
<g transform="translate(134,10) scale(1,0.72)"><use href="#fi"/></g>
<g transform="translate(175.5,10) scale(1,0.72)"><use href="#fi"/></g>
<g fill="#fff" font-family="Liberation Sans" font-weight="bold" font-size="10.5" text-anchor="middle">
<text x="18.5" y="29.3" textLength="19" lengthAdjust="spacingAndGlyphs">CSV</text>
<text x="60.5" y="29.3" textLength="19" lengthAdjust="spacingAndGlyphs">PDF</text>
<text x="103.5" y="29.3" textLength="19" lengthAdjust="spacingAndGlyphs">KML</text>
<text x="145.5" y="29.3" textLength="18" lengthAdjust="spacingAndGlyphs">XLS</text>
<text x="187" y="29.3" textLength="20" lengthAdjust="spacingAndGlyphs">SHP</text>
</g>
<path d="M217 15 L227.5 25.5 L238 15" fill="none" stroke="#444" stroke-width="3.4"/>
<path d="M264.5 15 L278.5 29 M278.5 15 L264.5 29" fill="none" stroke="#444" stroke-width="3.2"/>
</svg>
</body></html>
